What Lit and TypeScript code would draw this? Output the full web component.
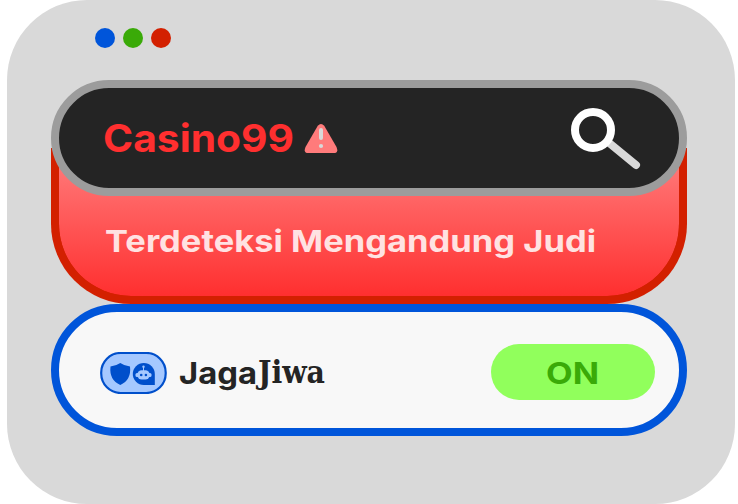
import { LitElement, html, css, svg } from "lit";
import { customElement, property } from "lit/decorators.js";

/** A run of text set to an exact advance width. */
@customElement("fitted-text")
class FittedText extends LitElement {
  @property() text = "";
  @property({ type: Number }) width = 100;
  @property({ type: Number }) size = 30;
  static styles = css`
    :host { display: block; }
    svg { display: block; overflow: visible; }
    text { fill: currentColor; }
  `;
  render() {
    const h = this.size;
    return html`<svg width=${this.width} height=${h}>
      ${svg`<text x="0" y=${h} font-size=${h} textLength=${this.width} lengthAdjust="spacingAndGlyphs">${this.text}</text>`}
    </svg>`;
  }
}

@customElement("app-root")
class AppRoot extends LitElement {
  static styles = css`
    :host { display: block; height: 504px; background: #fff; font-family: Inter, "Liberation Sans", sans-serif; font-weight: 700; }
    * { box-sizing: border-box; }
    svg { display: block; flex: none; }
    .window { width: 728px; height: 504px; margin-left: 7px; padding: 28px 48px 68px 44px; border-radius: 80px; background: #d9d9d9; }
    .dots { display: flex; gap: 8px; padding-left: 44px; height: 52px; }
    .dot { width: 20px; height: 20px; border-radius: 50%; }
    .blue { background: #0055da; }
    .green { background: #3aaa08; }
    .red { background: #d32000; }
    .search { position: relative; height: 116px; border: 8px solid #9c9c9c; border-radius: 58px; background: #242424; display: flex; align-items: flex-start; padding: 0 37px 0 44px; color: #ff2f2f; }
    .query { margin-top: 25px; }
    .warn { margin: 35px 0 0 10px; }
    .glass { margin: 19px 0 0 auto; }
    .alert { height: 156px; margin-top: -48px; border: 8px solid #d32000; border-top: 0; border-radius: 0 0 80px 80px; background: linear-gradient(#ff8080, #ff2f2f) padding-box, linear-gradient(#d32000, #d32000) border-box; color: #ffe2e2; padding: 72.5px 0 0 46px; }
    .control { height: 132px; border: 8px solid #0055da; border-radius: 66px; background: #f8f8f8; display: flex; align-items: flex-start; padding: 32px 24px 0 41px; color: #242424; }
    .badge { margin-top: 8px; }
    .brand { display: flex; align-items: flex-end; height: 39px; margin-left: 12px; gap: 1px; }
    .serif { font-family: "DejaVu Serif Condensed", "DejaVu Serif", serif; font-stretch: condensed; }
    .toggle { margin-left: auto; width: 164px; height: 56px; border-radius: 28px; background: #91ff5c; color: #3aaa08; display: flex; justify-content: center; padding: 8.5px 2px 0 0; }
  `;
  render() {
    return html`
      <div class="window">
        <div class="dots"><i class="dot blue"></i><i class="dot green"></i><i class="dot red"></i></div>
        <div class="search">
          <fitted-text class="query" text="Casino99" .width=${191} .size=${38.5}></fitted-text>
          <svg class="warn" width="34" height="31" viewBox="304 123 34 31">
            <path d="M317.8 125.8Q321 122 324.2 125.8L336.500 147Q339 153 333.500 153H308.500Q303 153 305.500 147Z" fill="#ff7b7b"/>
            <path d="M321 130V138" stroke="#d9d9d9" stroke-width="4" stroke-linecap="round"/>
            <circle cx="321" cy="146" r="2.1" fill="#d9d9d9"/>
          </svg>
          <svg class="glass" width="72" height="64" viewBox="570 107 72 64">
            <path d="M608 142L636 165" stroke="#d9d9d9" stroke-width="8" stroke-linecap="round"/>
            <circle cx="593" cy="130" r="18" fill="#242424" stroke="#fff" stroke-width="8"/>
          </svg>
        </div>
        <div class="alert"><fitted-text text="Terdeteksi Mengandung Judi" .width=${491} .size=${30.5}></fitted-text></div>
        <div class="control">
          <svg class="badge" width="67" height="42" viewBox="100 352 67 42">
            <rect x="101.2" y="353" width="64.500" height="40" rx="19.500" fill="#a5c8ff" stroke="#004fcb" stroke-width="2.2"/>
            <path d="M120.300 363Q125 366.200 130 366.500Q131.500 380 120.300 385Q109 380 110.500 366.500Q115.500 366.200 120.300 363Z" fill="#004fcb"/>
            <path d="M143.800 363A11 11 0 0 1 154.800 374V385H143.800A11 11 0 0 1 143.800 363Z" fill="#004fcb"/>
            <path d="M143.500 367V371" stroke="#a5c8ff" stroke-width="1"/>
            <circle cx="143.500" cy="366.800" r="1.200" fill="#a5c8ff"/>
            <rect x="135.500" y="373" width="16" height="4" rx="1.500" fill="#a5c8ff"/>
            <rect x="137.300" y="370.300" width="12.400" height="9.200" rx="4.400" fill="#a5c8ff"/>
            <circle cx="141.200" cy="375" r="1.300" fill="#004fcb"/>
            <circle cx="145.900" cy="375" r="1.300" fill="#004fcb"/>
          </svg>
          <div class="brand">
            <fitted-text text="Jaga" .width=${78} .size=${30.5}></fitted-text>
            <fitted-text class="serif" text="Jiwa" .width=${67} .size=${31}></fitted-text>
          </div>
          <div class="toggle"><fitted-text text="ON" .width=${53} .size=${30.5}></fitted-text></div>
        </div>
      </div>`;
  }
}
